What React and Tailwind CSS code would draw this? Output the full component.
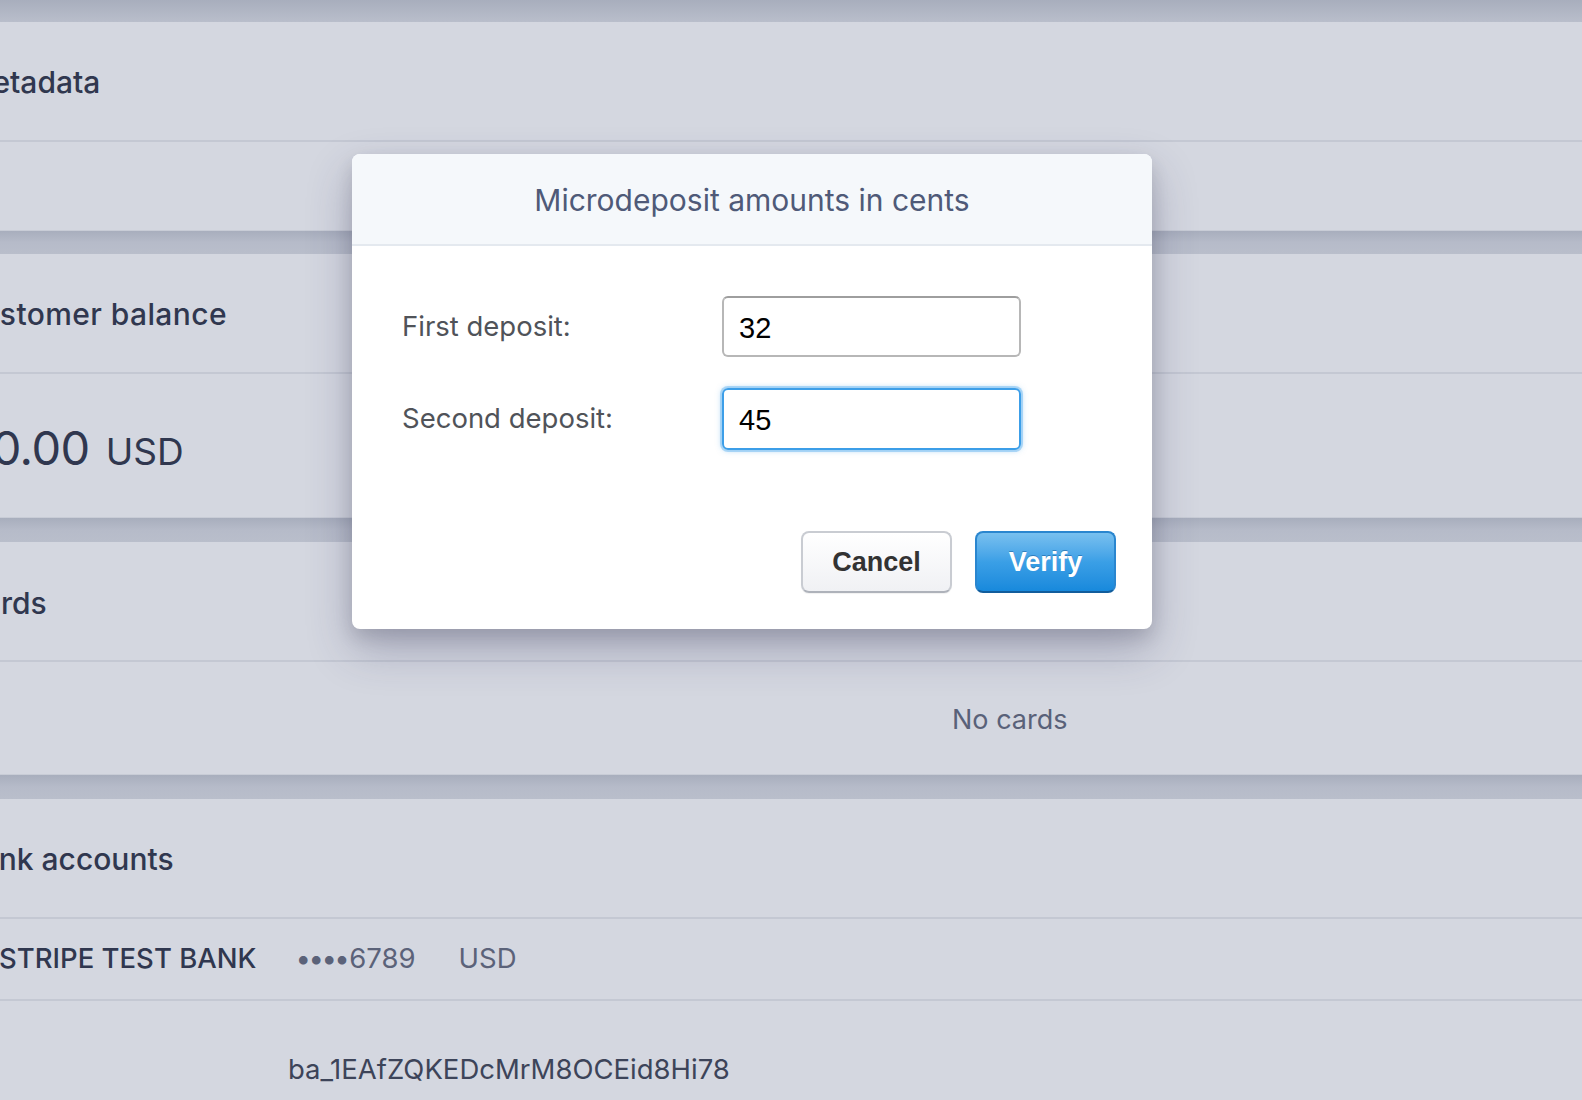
import React from "react";

function Gap({ h }) {
  return <div className={`${h} bg-gradient-to-b from-[#a8aebd] via-[#b6bbc9] to-[#b9becb]`} />;
}

export default function App() {
  const sans = { fontFamily: "Inter, 'Noto Sans', sans-serif" };
  return (
    <div className="relative w-[1582px] h-[1100px] overflow-hidden bg-[#b9becb]" style={sans}>
      <div className="flex flex-col">
        <div className="h-[22px] bg-gradient-to-b from-[#a8aebd] to-[#b9becb]" />

        {/* Metadata */}
        <div className="bg-[#d4d7e0] border-b border-[#c8ccd6]">
          <div className="h-[120px] flex items-center border-b-2 border-[#c4c8d3]">
            <span className="ml-[-35px] mt-[2px] text-[30px] font-medium text-[#30374f]">Metadata</span>
          </div>
          <div className="h-[88px]" />
        </div>
        <Gap h="h-[23px]" />

        {/* Customer balance */}
        <div className="bg-[#d4d7e0] border-b border-[#c8ccd6]">
          <div className="h-[120px] flex items-center border-b-2 border-[#c4c8d3]">
            <span className="ml-[-41px] mt-[2px] text-[30px] font-medium text-[#30374f] tracking-[0.4px]">Customer balance</span>
          </div>
          <div className="h-[143px] flex items-center">
            <div className="ml-[-38px] flex items-baseline gap-[16px] text-[#30374f] mt-[4px]">
              <span className="text-[47px] leading-none tracking-[-0.5px]">$0.00</span>
              <span className="text-[37px] leading-none">USD</span>
            </div>
          </div>
        </div>
        <Gap h="h-[24px]" />

        {/* Cards */}
        <div className="bg-[#d4d7e0] border-b border-[#c8ccd6]">
          <div className="h-[120px] flex items-center border-b-2 border-[#c4c8d3]">
            <span className="ml-[-38px] mt-[4px] text-[30px] font-medium text-[#30374f]">Cards</span>
          </div>
          <div className="h-[112px] flex items-center">
            <span className="ml-[952px] mt-[4px] text-[27px] text-[#596179]">No cards</span>
          </div>
        </div>
        <Gap h="h-[24px]" />

        {/* Bank accounts */}
        <div className="bg-[#d4d7e0]">
          <div className="h-[120px] flex items-center border-b-2 border-[#c4c8d3]">
            <span className="ml-[-38px] mt-[2px] text-[30px] font-medium text-[#30374f]">Bank accounts</span>
          </div>
          <div className="h-[82px] flex items-center border-b-2 border-[#c4c8d3] text-[27.5px]">
            <span className="ml-[-1px] font-medium text-[#30374f]">STRIPE TEST BANK</span>
            <span className="ml-[39px] text-[#5b6279]">
              <span className="tracking-[-2.5px] mr-[2px]">••••</span>6789
            </span>
            <span className="ml-[43px] text-[#5b6279]">USD</span>
          </div>
          <div className="h-[140px] flex items-start pt-[48px]">
            <span className="ml-[288px] text-[27.5px] text-[#3d4459]">ba_1EAfZQKEDcMrM8OCEid8Hi78</span>
          </div>
        </div>
      </div>

      {/* Modal */}
      <div className="absolute left-[352px] top-[154px] w-[800px] rounded-[8px] bg-white shadow-[0_20px_45px_rgba(50,50,93,0.3),0_8px_18px_rgba(0,0,0,0.12)] overflow-hidden">
        <div className="h-[92px] bg-[#f5f8fb] border-b-2 border-[#e4e9ef] flex items-center justify-center">
          <span className="mt-[3px] text-[30px] text-[#4f5a78]">Microdeposit amounts in cents</span>
        </div>
        <div className="pt-[50px] pl-[50px] pr-[36px] pb-[36px]">
          <div className="flex flex-col gap-[31px]">
            <div className="flex items-center">
              <span className="w-[320px] text-[27.5px] text-[#505359]">First deposit:</span>
              <div className="w-[299px] h-[61px] rounded-[6px] border-2 border-[#b7b7b7] border-t-[#9e9e9e] flex items-center pl-[15px] pt-[4px] text-[29px] text-black" style={{ fontFamily: "'Liberation Sans', Arial, sans-serif" }}>32</div>
            </div>
            <div className="flex items-center">
              <span className="w-[320px] text-[27.5px] text-[#505359]">Second deposit:</span>
              <div className="w-[299px] h-[62px] rounded-[6px] border-2 border-[#3c9ee8] shadow-[0_0_0_2px_rgba(100,180,240,0.45),0_0_6px_rgba(60,158,232,0.5)] flex items-center pl-[15px] pt-[4px] text-[29px] text-black" style={{ fontFamily: "'Liberation Sans', Arial, sans-serif" }}>45</div>
            </div>
          </div>
          <div className="flex justify-end gap-[23px] mt-[81px]" style={{ fontFamily: "'Liberation Sans', Arial, sans-serif" }}>
            <div className="w-[151px] h-[62px] rounded-[8px] border-2 border-[#c9ccd2] border-b-[#aeb2ba] bg-gradient-to-b from-white to-[#f0f1f4] flex items-center justify-center text-[27px] font-bold text-[#333] shadow-[0_1px_1px_rgba(0,0,0,0.06)]">Cancel</div>
            <div className="w-[141px] h-[62px] rounded-[8px] border-2 border-[#2a86cf] border-b-[#125d9c] bg-gradient-to-b from-[#78c0ef] via-[#3a9fe6] to-[#1789dc] flex items-center justify-center text-[27px] font-bold text-white [text-shadow:0_-1px_0_rgba(0,60,120,0.4)]">Verify</div>
          </div>
        </div>
      </div>
    </div>
  );
}
